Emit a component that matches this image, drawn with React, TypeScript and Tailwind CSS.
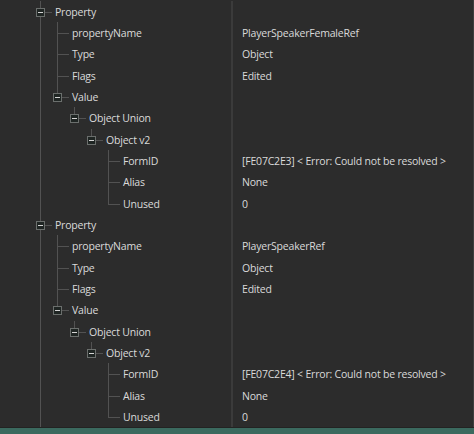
import React from "react";

type Node = {
  label: string;
  value?: string;
  children?: Node[];
};

type Row = {
  node: Node;
  level: number;
  last: boolean;
  anc: boolean[];
};

const property = (name: string, formId: string): Node => ({
  label: "Property",
  children: [
    { label: "propertyName", value: name },
    { label: "Type", value: "Object" },
    { label: "Flags", value: "Edited" },
    {
      label: "Value",
      children: [
        {
          label: "Object Union",
          children: [
            {
              label: "Object v2",
              children: [
                { label: "FormID", value: `[${formId}] < Error: Could not be resolved >` },
                { label: "Alias", value: "None" },
                { label: "Unused", value: "0" },
              ],
            },
          ],
        },
      ],
    },
  ],
});

const tree: Node[] = [
  property("PlayerSpeakerFemaleRef", "FE07C2E3"),
  property("PlayerSpeakerRef", "FE07C2E4"),
];

const flatten = (nodes: Node[], level: number, anc: boolean[], out: Row[]) => {
  nodes.forEach((node, i) => {
    // top level properties keep going past the bottom of the view
    const last = level > 0 && i === nodes.length - 1;
    out.push({ node, level, last, anc });
    if (node.children) flatten(node.children, level + 1, [...anc, !last], out);
  });
  return out;
};

const rows = flatten(tree, 0, [], []);

const LINE = "bg-[#525252]";

const Guide = ({ on }: { on: boolean }) => (
  <div className="relative w-[17px] shrink-0 self-stretch">
    {on && <div className={`absolute left-[8px] top-0 bottom-0 w-px ${LINE}`} />}
  </div>
);

const Branch = ({ last, open }: { last: boolean; open: boolean }) => (
  <div className="relative w-[17px] shrink-0 self-stretch">
    <div className={`absolute left-[8px] top-0 h-[11px] w-px ${LINE}`} />
    {!last && <div className={`absolute left-[8px] top-[11px] bottom-0 w-px ${LINE}`} />}
    <div className={`absolute left-[8px] top-[11px] h-px w-[12px] ${LINE}`} />
    {open && (
      <div className="absolute left-[4px] top-[7px] flex h-[9px] w-[9px] items-center justify-center border border-[#6b6f6d] bg-[#1f2523]">
        <div className="h-px w-[5px] bg-[#d4d4d4]" />
      </div>
    )}
  </div>
);

export default function App() {
  return (
    <div className="flex h-[434px] w-[474px] flex-col overflow-hidden bg-[#2c2c2c] font-['Open_Sans',sans-serif] text-[10.5px] tracking-[-0.2px] text-[#dadada]">
      <div className="flex flex-1 flex-col border-r border-[#3e3e3e] pt-px">
        {rows.map((r, i) => (
          <div key={i} className={`flex ${i % 3 === 2 ? "h-[22px]" : "h-[21px]"}`}>
            <div className="flex w-[231px] shrink-0 items-center pl-[32px]">
              {r.anc.map((on, j) => (
                <Guide key={j} on={on} />
              ))}
              <Branch last={r.last} open={!!r.node.children} />
              <span className="ml-[6px] whitespace-nowrap pt-[2px]">{r.node.label}</span>
            </div>
            <div className="flex flex-1 items-center border-l-2 border-[#3b3b3b] pl-[9px]">
              <span className="whitespace-nowrap pt-[2px]">{r.node.value}</span>
            </div>
          </div>
        ))}
        <div className="flex flex-1">
          <div className="w-[231px] shrink-0 pl-[32px]">
            <Guide on />
          </div>
          <div className="flex-1 border-l-2 border-[#3b3b3b]" />
        </div>
      </div>
      <div className="h-[7px] shrink-0 border-t border-[#232323] bg-[#3b6a5f]" />
    </div>
  );
}
